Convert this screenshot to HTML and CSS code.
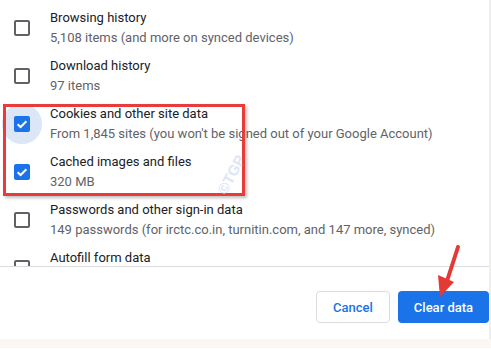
FILE: index.html
```html
<!DOCTYPE html>
<html>
<head>
<meta charset="utf-8">
<link rel="stylesheet" href="styles.css">
</head>
<body>
<div class="dialog">
  <div class="list">
    <div class="row">
      <span class="box"></span>
      <div class="texts"><div class="label">Browsing history</div><div class="sub">5,108 items (and more on synced devices)</div></div>
    </div>
    <div class="row">
      <span class="box"></span>
      <div class="texts"><div class="label">Download history</div><div class="sub">97 items</div></div>
    </div>
    <div class="row">
      <span class="box checked ripple"><svg viewBox="0 0 16 16" width="16" height="16"><polyline points="3.6,8.2 6.6,11 12.4,5.2" fill="none" stroke="#fff" stroke-width="2"/></svg></span>
      <div class="texts"><div class="label">Cookies and other site data</div><div class="sub">From 1,845 sites (you won't be signed out of your Google Account)</div></div>
    </div>
    <div class="row">
      <span class="box checked"><svg viewBox="0 0 16 16" width="16" height="16"><polyline points="3.6,8.2 6.6,11 12.4,5.2" fill="none" stroke="#fff" stroke-width="2"/></svg></span>
      <div class="texts"><div class="label">Cached images and files</div><div class="sub">320 MB</div></div>
    </div>
    <div class="row">
      <span class="box"></span>
      <div class="texts"><div class="label">Passwords and other sign-in data</div><div class="sub">149 passwords (for irctc.co.in, turnitin.com, and 147 more, synced)</div></div>
    </div>
    <div class="row">
      <span class="box"></span>
      <div class="texts"><div class="label">Autofill form data</div><div class="sub">&nbsp;</div></div>
    </div>
  </div>
  <div class="actions">
    <button class="btn cancel">Cancel</button>
    <button class="btn primary">Clear data</button>
  </div>
</div>
<div class="strip"></div>
<div class="highlight"></div>
<div class="watermark">©TGP</div>
<svg class="arrow" width="40" height="60" viewBox="0 0 40 60">
  <line x1="33" y1="6" x2="22" y2="40" stroke="#e53935" stroke-width="4" stroke-linecap="round"/>
  <polygon points="13,34 29,41 15,56" fill="#e53935"/>
</svg>
</body>
</html>
```
FILE: styles.css
```css
html, body {
  margin: 0;
  padding: 0;
  background: #ffffff;
}
body {
  width: 491px;
  height: 349px;
  overflow: hidden;
  position: relative;
  font-family: Roboto, "Liberation Sans", Arial, sans-serif;
  font-size: 13px;
}
.dialog {
  display: flex;
  flex-direction: column;
  border-right: 2px solid #f1eeee;
  width: 489px;
}
.list {
  height: 267px;
  overflow: hidden;
  border-bottom: 1px solid #dadce0;
  padding-top: 8px;
  box-sizing: border-box;
  display: flex;
  flex-direction: column;
  gap: 8px;
  position: relative;
  z-index: 0;
}
.row {
  display: flex;
  align-items: center;
  height: 40px;
  flex-shrink: 0;
  padding-left: 14px;
  gap: 20px;
}
.box {
  width: 16px;
  height: 16px;
  box-sizing: border-box;
  border: 2px solid #5f6368;
  border-radius: 2px;
  flex-shrink: 0;
  position: relative;
}
.box.checked {
  border: none;
  background: #1a73e8;
}
.box svg {
  display: block;
}
.box.ripple::before {
  content: "";
  position: absolute;
  left: -12px;
  top: -12px;
  width: 40px;
  height: 40px;
  border-radius: 50%;
  background: #dbe6f6;
  z-index: -1;
}
.texts {
  line-height: 20px;
  white-space: nowrap;
}
.label {
  color: #202124;
}
.sub {
  color: #5f6368;
}
.actions {
  height: 72px;
  box-sizing: border-box;
  padding-top: 24px;
  display: flex;
  justify-content: flex-end;
  align-items: flex-start;
  gap: 8px;
}
.btn {
  height: 32px;
  border-radius: 4px;
  font-family: Roboto, "Liberation Sans", Arial, sans-serif;
  font-size: 13px;
  font-weight: 500;
  box-sizing: border-box;
  padding: 0;
}
.cancel {
  width: 74px;
  background: #ffffff;
  color: #1a73e8;
  border: 1px solid #dadce0;
}
.primary {
  width: 91px;
  background: #1a73e8;
  color: #ffffff;
  border: none;
}
.strip {
  height: 9px;
  background: #fbf8f1;
}
.highlight {
  position: absolute;
  left: 3px;
  top: 104px;
  width: 242px;
  height: 92px;
  box-sizing: border-box;
  border: 3px solid #ea3b3b;
  box-shadow: 2px 2px 3px rgba(0,0,0,0.25);
}
.watermark {
  position: absolute;
  left: 210px;
  top: 166px;
  color: #dce7f5;
  font-size: 15px;
  font-weight: 700;
  transform: rotate(-62deg);
  font-family: "Liberation Sans", Arial, sans-serif;
}
.arrow {
  position: absolute;
  left: 425px;
  top: 241px;
}
```
